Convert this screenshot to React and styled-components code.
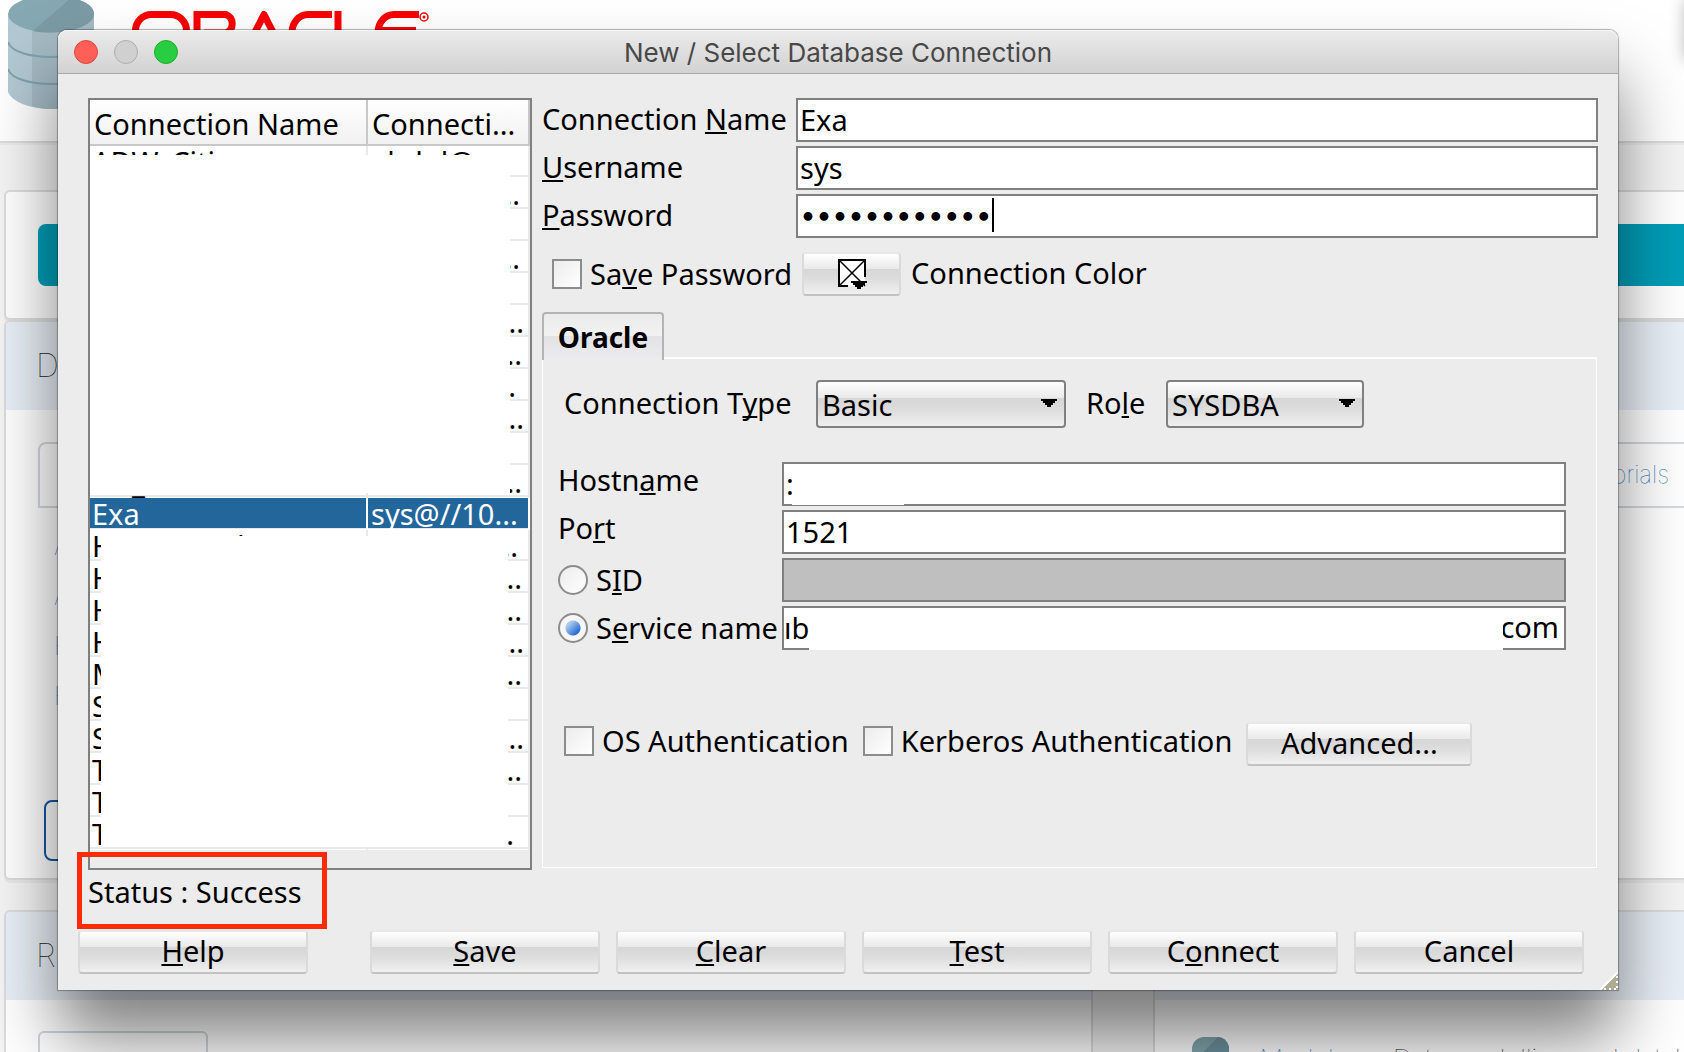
import React from "react";
import styled, { createGlobalStyle, css } from "styled-components";

const GlobalStyle = createGlobalStyle`
  *, *::before, *::after { box-sizing: border-box; }
  body {
    margin: 0;
    font-family: "Noto Sans", "Open Sans", sans-serif;
    font-size: 29px;
    line-height: 32px;
    color: #000;
    background: #f4f4f4;
  }
`;

/* ---------- desktop and the web page behind the dialog ---------- */

const Desktop = styled.div`
  position: relative;
  min-height: 100vh;
  overflow: hidden;
  display: flex;
  flex-direction: column;
`;

const BackPage = styled.div`
  position: absolute;
  inset: 0;
  overflow: hidden;
  background: #f4f4f4;
  font-family: Inter, "Liberation Sans", sans-serif;
  font-weight: 100;
`;

const BackHeader = styled.header`
  display: flex;
  align-items: flex-start;
  gap: 38px;
  height: 143px;
  padding-left: 8px;
  background: #fff;
  border-bottom: 2px solid #dcdcdc;
  box-shadow: 0 2px 0 #ebebeb;
`;

const BackBody = styled.div`
  display: flex;
  flex-direction: column;
  padding: 47px 0 0 4px;
`;

const BackCard = styled.section`
  display: flex;
  flex-direction: column;
  flex: ${(p) => p.$flex || "none"};
  height: ${(p) => p.$height}px;
  min-width: 0;
  background: #fff;
  border: 2px solid #dcdcdc;
  border-right-width: ${(p) => (p.$closed ? 2 : 0)}px;
  border-radius: 6px ${(p) => (p.$closed ? "6px 6px" : "0 0")} 6px;
  box-shadow: 0 3px 0 #e9e9e9;
  overflow: hidden;
`;

const BackCardTitle = styled.h2`
  height: 88px;
  flex: none;
  margin: 0;
  padding-left: 30px;
  background: #e9eff7;
  font-size: 32px;
  line-height: 88px;
  font-weight: 100;
  color: #222;
`;

const TealBar = styled.div`
  height: 62px;
  margin: 32px 0 0 32px;
  border-radius: 8px 0 0 8px;
  background: #009eb8;
`;

const TabStrip = styled.nav`
  display: flex;
  justify-content: flex-end;
  height: 66px;
  margin: 32px 0 0 32px;
  padding-right: 15px;
  border: 2px solid #d3dae0;
  border-right: 0;
  border-radius: 8px 0 0 0;
`;

const BackLink = styled.a`
  color: #1f6fb2;
  text-decoration: none;
  font-size: ${(p) => p.$size || 25}px;
  line-height: ${(p) => p.$line || 50}px;
`;

const LinkList = styled.div`
  display: flex;
  flex-direction: column;
  padding: 13px 0 0 48px;
`;

const OutlineBox = styled.div`
  width: 300px;
  height: 61px;
  margin: 79px 0 0 38px;
  border: 2px solid #12589f;
  border-radius: 8px;
`;

const BackColumns = styled.div`
  display: flex;
  gap: 60px;
  margin-top: 30px;
`;

const GreyBox = styled.div`
  width: 170px;
  height: 60px;
  margin: 31px 0 0 32px;
  border: 2px solid #cfd6da;
  border-radius: 6px;
`;

const ModelerRow = styled.div`
  display: flex;
  align-items: flex-start;
  gap: 31px;
  padding: 37px 0 0 37px;
  font-size: 26px;
  color: #222;
  white-space: nowrap;
  > svg { flex: none; }
`;

const ModelerText = styled.p`
  display: flex;
  gap: 36px;
  margin: 6px 0 0;
`;

const CornerShade = styled.div`
  position: absolute;
  top: 0;
  right: -20px;
  width: 20px;
  height: 60px;
  box-shadow: 0 0 16px rgba(0, 0, 0, 0.25);
`;

/* ---------- dialog ---------- */

const Dialog = styled.main`
  position: relative;
  display: flex;
  flex-direction: column;
  margin: 30px 66px 62px 58px;
  background: #ececec;
  border-radius: 9px 9px 0 0;
  box-shadow: 0 0 1px 1px rgba(0, 0, 0, 0.3), 0 48px 68px rgba(0, 0, 0, 0.5);
`;

const TitleBar = styled.header`
  display: grid;
  grid-template-columns: 1fr auto 1fr;
  align-items: center;
  height: 44px;
  padding: 0 16px;
  border-bottom: 1px solid #a9a9a9;
  border-radius: 9px 9px 0 0;
  background: linear-gradient(#ebebeb, #d2d2d2);
  box-shadow: inset 0 1px 0 #f6f6f6;
`;

const Lights = styled.div`
  display: flex;
  gap: 16px;
`;

const Light = styled.button`
  width: 24px;
  height: 24px;
  padding: 0;
  border: 1px solid ${(p) => p.$edge};
  border-radius: 50%;
  background: ${(p) => p.$fill};
`;

const Title = styled.h1`
  margin: 0;
  padding-top: 2px;
  font-family: Inter, Roboto, sans-serif;
  font-size: 26px;
  font-weight: 400;
  color: #484848;
`;

const Content = styled.div`
  display: flex;
  gap: 10px;
  padding: 24px 20px 0 30px;
`;

const ListFrame = styled.div`
  position: relative;
  flex: none;
  width: 444px;
  padding-bottom: 18px;
  border: 2px solid #808080;
`;

const ConnTable = styled.table`
  width: 100%;
  table-layout: fixed;
  border-collapse: separate;
  border-spacing: 0;
  background: #fff;
`;

const HeadCell = styled.th`
  width: ${(p) => p.$width || "auto"};
  height: 46px;
  padding: 4px 0 0 4px;
  border-right: 2px solid #c8c8c8;
  border-bottom: 2px solid #c8c8c8;
  background: linear-gradient(#fff, #f1f1f1);
  font-weight: 400;
  text-align: left;
  white-space: nowrap;
  line-height: 40px;
`;

const Cell = styled.td`
  height: 32px;
  padding: 0 ${(p) => p.$end || 0}px 0 ${(p) => (p.$end ? 0 : p.$start)}px;
  overflow: hidden;
  white-space: nowrap;
  text-align: ${(p) => (p.$end ? "right" : "left")};
  line-height: 32px;
  color: ${(p) => (p.$selected ? "#fff" : "#000")};
  background: linear-gradient(
    ${(p) => (p.$selected ? "#22669c" : "#fff")} ${(p) => (p.$selected ? 30 : 29)}px,
    #e9e9e9 ${(p) => (p.$selected ? 30 : 29)}px,
    #e9e9e9 31px,
    #fff 31px
  );
  border-right: 2px solid ${(p) => (p.$selected ? "#fff" : "#e9e9e9")};
`;

const ListMask = styled.div`
  position: absolute;
  left: ${(p) => p.$left}px;
  right: ${(p) => p.$right}px;
  top: ${(p) => p.$top}px;
  height: ${(p) => p.$height}px;
  background: #fff;
`;

const FormSide = styled.div`
  display: flex;
  flex: 1;
  flex-direction: column;
  min-width: 0;
  padding-bottom: 2px;
`;

const FieldGrid = styled.div`
  display: grid;
  grid-template-columns: ${(p) => p.$label}px 1fr;
  row-gap: 4px;
  align-items: center;
`;

const Label = styled.label`
  width: ${(p) => (p.$width ? p.$width + "px" : "auto")};
  padding-bottom: ${(p) => (p.$raised ? 8 : 2)}px;
  white-space: nowrap;
`;

const Mark = styled.span`
  text-decoration: underline;
  text-decoration-thickness: 2px;
  text-underline-offset: 2px;
  text-decoration-skip-ink: none;
`;

const fieldFrame = css`
  width: 100%;
  height: 44px;
  border: 2px solid #808080;
  border-radius: 0;
  background: #fff;
`;

const Input = styled.input`
  ${fieldFrame}
  padding: 0 2px 2px;
  font: inherit;
  color: #000;
  outline: none;
  &:disabled { background: #bfbfbf; }
`;

const PasswordInput = styled(Input)`
  padding: 2px 2px 0;
  font-family: "DejaVu Sans", sans-serif;
  font-size: 25px;
  font-weight: 700;
`;

const Stack = styled.div`
  position: relative;
  display: flex;
`;

const Caret = styled.span`
  position: absolute;
  left: 196px;
  top: 4px;
  width: 2px;
  height: 34px;
  background: #000;
`;

const FieldMask = styled.span`
  position: absolute;
  left: 10px;
  top: 2px;
  bottom: 1px;
  width: 112px;
  background: #fff;
`;

const SplitField = styled.div`
  ${fieldFrame}
  position: relative;
  display: flex;
  align-items: center;
  padding: 0 5px 2px 0;
`;

const SplitMask = styled.span`
  position: absolute;
  left: 25px;
  right: 61px;
  top: 0;
  bottom: -2px;
  background: #fff;
`;

const BareInput = styled.input`
  flex: 1;
  min-width: 0;
  height: 38px;
  padding: 0;
  border: 0;
  background: transparent;
  font: inherit;
  outline: none;
`;

const OptionRow = styled.div`
  display: flex;
  align-items: center;
  gap: ${(p) => p.$gap}px;
  margin-top: ${(p) => p.$top}px;
  padding-left: ${(p) => p.$left}px;
`;

const Choice = styled.label`
  display: flex;
  align-items: center;
  gap: 8px;
  padding-bottom: ${(p) => (p.$raised ? 6 : 0)}px;
  white-space: nowrap;
`;

const Check = styled.input`
  appearance: none;
  flex: none;
  width: 30px;
  height: 30px;
  margin: 0;
  border: 2px solid #8c8c8c;
  background: linear-gradient(135deg, #ececec, #fff);
`;

const Radio = styled(Check)`
  border-radius: 50%;
  &:checked {
    background:
      radial-gradient(circle at 50% 50%, transparent 7px, #f6f6f6 8px),
      linear-gradient(135deg, #a9c8ec 35%, #2f72d6 65%);
  }
`;

const glossy = css`
  background: linear-gradient(#fff 0, #e9e9e9 37%, #d6d6d6 37%, #dcdcdc 60%, #f0f0f0 100%);
`;

const Button = styled.button`
  ${glossy}
  height: 44px;
  flex: ${(p) => (p.$width ? "none" : "1")};
  width: ${(p) => (p.$width ? p.$width + "px" : "auto")};
  margin: 0;
  padding: 0 0 2px;
  border: 2px solid #dadada;
  border-top-color: #e8e8e8;
  border-bottom-color: #c2c2c2;
  border-radius: 4px;
  font: inherit;
  color: #000;
  line-height: 36px;
`;

const ColorGlyph = styled.svg`
  display: block;
  margin: 0 auto;
`;

const Tab = styled.button`
  position: relative;
  align-self: flex-start;
  width: 122px;
  height: 48px;
  margin: 16px 0 -3px;
  padding: 0;
  border: 2px solid #b4b4b4;
  border-bottom: 0;
  border-radius: 4px 4px 0 0;
  background: linear-gradient(#ebebeb 0, #f2f2f2 47%, #e2e2e4 47%, #ececee 100%);
  font: inherit;
  font-size: 28px;
  font-weight: 700;
  color: #000;
`;

const Panel = styled.section`
  display: flex;
  flex: 1;
  flex-direction: column;
  margin-right: 1px;
  padding: 21px 30px 0 15px;
  border: 1px solid #fff;
  border-top-width: 2px;
`;

const TypeRow = styled.div`
  display: flex;
  align-items: center;
  margin-bottom: 34px;
  padding-left: 6px;
`;

const SelectBox = styled.div`
  display: grid;
  width: ${(p) => p.$width}px;
  margin-right: 20px;
  align-items: center;
  > * { grid-area: 1 / 1; }
  > svg {
    justify-self: end;
    margin: 0 9px 3px 0;
    pointer-events: none;
  }
`;

const Select = styled.select`
  ${glossy}
  appearance: none;
  width: 100%;
  height: 48px;
  padding: 2px 4px 0;
  border: 2px solid #808080;
  border-radius: 4px;
  font: inherit;
  color: #000;
`;

const StatusLine = styled.div`
  position: relative;
  display: flex;
  align-items: center;
  height: 60px;
  padding: 0 30px 16px;
`;

const Highlight = styled.span`
  position: absolute;
  left: 19px;
  top: -18px;
  width: 250px;
  height: 77px;
  border: 5px solid #ff2b06;
`;

const Footer = styled.footer`
  display: flex;
  gap: 16px;
  padding: 0 34px 16px 20px;
  > :first-child { margin-right: 46px; }
`;

const Grip = styled.svg`
  position: absolute;
  right: 0;
  bottom: 0;
`;

/* ---------- data ---------- */

// `end` is the distance of the trailing ellipsis from the column's right edge.
const rows = [
  { name: "ADW_Citi", detail: "abdul@" },
  { end: 8 }, {}, { end: 8 }, {}, { end: 4 }, { end: 6 }, { end: 12 },
  { end: 4 }, {}, { name: "DB_", end: 6 },
  { name: "Exa", detail: "sys@//10...", selected: true },
  { name: "Human Std ADW", end: 10 },
  { name: "H", end: 6 }, { name: "H", end: 6 }, { name: "H", end: 4 },
  { name: "M", end: 6 }, { name: "S" }, { name: "S", end: 4 },
  { name: "T", end: 6 }, { name: "T" }, { name: "T", end: 14 },
];

/* ---------- pieces ---------- */

function Mnemonic({ text, at }) {
  return (
    <span>
      {text.slice(0, at)}
      <Mark>{text[at]}</Mark>
      {text.slice(at + 1)}
    </span>
  );
}

function DatabaseLogo() {
  return (
    <svg width="86" height="110" viewBox="0 0 86 110" aria-hidden="true">
      <path d="M0 14V92C4 102 22 109 43 109S82 102 86 92V14Z" fill="#b2c8d2" />
      <path d="M24 28V106C30 108 37 109 43 109C64 109 82 102 86 92V14Z" fill="#a5bac4" />
      <ellipse cx="43" cy="14" rx="43" ry="18.500" fill="#86a8b2" />
      <path d="M63 -2L25 31C50 36 86 28 86 14C86 6 76 0 63 -2Z" fill="#7b9ba4" />
      <path d="M0 42C6 62 80 62 86 42M0 69C6 89 80 89 86 69" fill="none" stroke="#7fa1ad" strokeWidth="2" />
    </svg>
  );
}

function OracleLogo() {
  return (
    <svg width="300" height="60" viewBox="0 0 300 60" role="img" aria-label="Oracle">
      <g fill="none" stroke="#f80000" strokeWidth="7">
        <rect x="3.500" y="14.500" width="51" height="36" rx="16" />
        <path d="M65 54V14.500H94A10 10 0 0 1 94 33H72" />
        <path d="M112 54L132 14.500L152 54" strokeLinejoin="round" />
        <path d="M200 14.500H176A16 18 0 0 0 176 50.500H200" />
        <path d="M206 11V50H238" />
        <path d="M287 14.500H262A16 18 0 0 0 262 50.500H285M246 30.500H284" />
      </g>
      <circle cx="292" cy="17" r="4" fill="none" stroke="#f80000" strokeWidth="1.500" />
      <circle cx="292" cy="17" r="1.500" fill="#f80000" />
    </svg>
  );
}

function Arrow() {
  return (
    <svg width="16" height="8" viewBox="0 0 16 8" aria-hidden="true">
      <path d="M0 0H16V2H14V4H12V6H10V8H6V6H4V4H2V2H0Z" fill="#000" />
    </svg>
  );
}

function BackgroundPage() {
  return (
    <BackPage>
      <BackHeader>
        <DatabaseLogo />
        <OracleLogo />
      </BackHeader>
      <BackBody>
        <BackCard $height={130}>
          <TealBar />
        </BackCard>
        <BackCard $height={560}>
          <BackCardTitle>D</BackCardTitle>
          <TabStrip>
            <BackLink href="#tutorials" $size={24} $line={62}>Tutorials</BackLink>
          </TabStrip>
          <LinkList>
            <BackLink href="#a1">A</BackLink>
            <BackLink href="#a2">A</BackLink>
            <BackLink href="#h1">H</BackLink>
            <BackLink href="#h2">H</BackLink>
          </LinkList>
          <OutlineBox />
        </BackCard>
        <BackColumns>
          <BackCard $height={300} $flex="41 1 0px" $closed>
            <BackCardTitle>R</BackCardTitle>
            <GreyBox />
          </BackCard>
          <BackCard $height={300} $flex="20 1 0px">
            <BackCardTitle />
            <ModelerRow>
              <svg width="37" height="44" viewBox="0 0 37 44" aria-hidden="true">
                <rect width="37" height="44" rx="12" fill="#84a6b0" />
                <path d="M26 0L12 14V44H37V10Q34 0 26 0Z" fill="#6d929e" />
              </svg>
              <ModelerText>
                <BackLink href="#modeler" $size={26} $line={32}>Modeler</BackLink>
                <span>Data modelling and database</span>
              </ModelerText>
            </ModelerRow>
          </BackCard>
        </BackColumns>
      </BackBody>
      <CornerShade />
    </BackPage>
  );
}

function ConnectionList() {
  return (
    <ListFrame>
      <ConnTable>
        <thead>
          <tr>
            <HeadCell $width="278px">Connection Name</HeadCell>
            <HeadCell>Connecti...</HeadCell>
          </tr>
        </thead>
        <tbody>
          {rows.map((row, i) => (
            <tr key={i}>
              <Cell $start={2} $selected={row.selected}>{row.name}</Cell>
              <Cell $start={3} $end={row.end} $selected={row.selected}>
                {row.detail || (row.end ? "..." : "")}
              </Cell>
            </tr>
          ))}
        </tbody>
      </ConnTable>
      <ListMask $left={0} $right={20} $top={55} $height={338} />
      <ListMask $left={11} $right={22} $top={436} $height={311} />
    </ListFrame>
  );
}

export default function App() {
  return (
    <Desktop>
      <GlobalStyle />
      <BackgroundPage />
      <Dialog>
        <TitleBar>
          <Lights>
            <Light aria-label="Close" $fill="#ff5f57" $edge="#e2463f" />
            <Light aria-label="Minimize" $fill="#d0d0d0" $edge="#adadad" />
            <Light aria-label="Zoom" $fill="#28cd41" $edge="#1dad2b" />
          </Lights>
          <Title>New / Select Database Connection</Title>
        </TitleBar>

        <Content>
          <ConnectionList />
          <FormSide>
            <FieldGrid $label={254}>
              <Label htmlFor="name"><Mnemonic text="Connection Name" at={11} /></Label>
              <Input id="name" defaultValue="Exa" />
              <Label htmlFor="user"><Mnemonic text="Username" at={0} /></Label>
              <Input id="user" defaultValue="sys" />
              <Label htmlFor="pass"><Mnemonic text="Password" at={0} /></Label>
              <Stack>
                <PasswordInput id="pass" type="password" defaultValue="abcdefghijkl" />
                <Caret />
              </Stack>
            </FieldGrid>

            <OptionRow $top={14} $left={10} $gap={10}>
              <Choice>
                <Check type="checkbox" />
                <Mnemonic text="Save Password" at={2} />
              </Choice>
              <Button id="color" $width={99} aria-label="Choose color">
                <ColorGlyph width="30" height="32" viewBox="0 0 30 32">
                  <rect x="2" y="3" width="26" height="26" fill="#fff" />
                  <path d="M2 3L28 29M28 3L2 29" stroke="#000" strokeWidth="1.500" />
                  <path d="M11 29H2V3H28V20" fill="none" stroke="#000" strokeWidth="2" />
                  <path d="M14 24H30V26H28V28H26V30H24V32H20V30H18V28H16V26H14Z" fill="#000" />
                </ColorGlyph>
              </Button>
              <Label htmlFor="color">Connection Color</Label>
            </OptionRow>

            <Tab>Oracle</Tab>
            <Panel>
              <TypeRow>
                <Label htmlFor="type" $width={252}><Mnemonic text="Connection Type" at={12} /></Label>
                <SelectBox $width={250}>
                  <Select id="type"><option>Basic</option></Select>
                  <Arrow />
                </SelectBox>
                <Label htmlFor="role" $width={80}><Mnemonic text="Role" at={2} /></Label>
                <SelectBox $width={198}>
                  <Select id="role"><option>SYSDBA</option></Select>
                  <Arrow />
                </SelectBox>
              </TypeRow>

              <FieldGrid $label={224}>
                <Label htmlFor="host" $raised><Mnemonic text="Hostname" at={5} /></Label>
                <Stack>
                  <Input id="host" defaultValue=":" />
                  <FieldMask />
                </Stack>
                <Label htmlFor="port" $raised><Mnemonic text="Port" at={2} /></Label>
                <Input id="port" defaultValue="1521" />
                <Choice>
                  <Radio type="radio" name="target" />
                  <Mnemonic text="SID" at={1} />
                </Choice>
                <Input aria-label="SID value" disabled />
                <Choice>
                  <Radio type="radio" name="target" defaultChecked />
                  <Mnemonic text="Service name" at={1} />
                </Choice>
                <SplitField>
                  <BareInput aria-label="Service name value" defaultValue="ıb" />
                  <SplitMask />
                  <span>com</span>
                </SplitField>
              </FieldGrid>

              <OptionRow $top={72} $left={6} $gap={14}>
                <Choice $raised><Check type="checkbox" />OS Authentication</Choice>
                <Choice $raised><Check type="checkbox" />Kerberos Authentication</Choice>
                <Button $width={226}>Advanced...</Button>
              </OptionRow>
            </Panel>
          </FormSide>
        </Content>

        <StatusLine>
          Status : Success
          <Highlight />
        </StatusLine>

        <Footer>
          <Button><Mnemonic text="Help" at={0} /></Button>
          <Button><Mnemonic text="Save" at={0} /></Button>
          <Button><Mnemonic text="Clear" at={0} /></Button>
          <Button><Mnemonic text="Test" at={0} /></Button>
          <Button><Mnemonic text="Connect" at={1} /></Button>
          <Button>Cancel</Button>
        </Footer>

        <Grip width="18" height="18" viewBox="0 0 18 18" aria-hidden="true">
          <path d="M18 1V18H1Z" fill="#aeab93" />
          <path d="M0 18L18 0" stroke="#fff" strokeWidth="2" />
          <path d="M4 17H18M17 4V18" stroke="#fff" strokeWidth="2" strokeDasharray="2 3" />
        </Grip>
      </Dialog>
    </Desktop>
  );
}
